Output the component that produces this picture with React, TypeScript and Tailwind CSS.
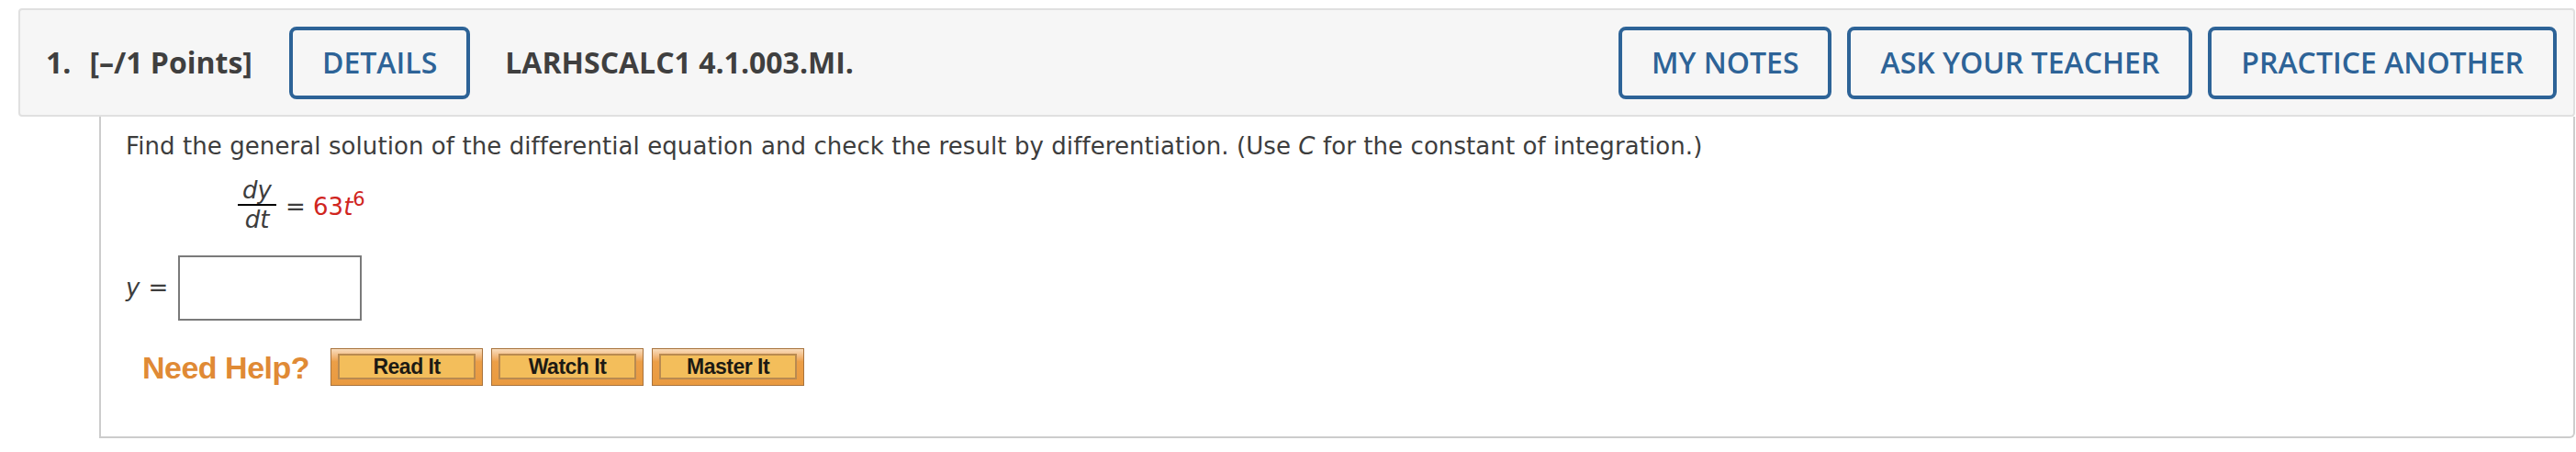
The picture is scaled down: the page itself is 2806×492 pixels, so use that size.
import React from 'react';

const headerFont = { fontFamily: '"Open Sans", "Liberation Sans", sans-serif' };
const bodyFont = { fontFamily: '"DejaVu Sans", Verdana, sans-serif' };
const helpFont = { fontFamily: '"Liberation Sans", Arial, sans-serif' };

const OutlineButton: React.FC<{ label: string }> = ({ label }) => (
  <button
    className="h-[79px] px-[32px] border-4 border-[#2d6397] rounded-[8px] text-[32px] font-semibold text-[#2d6397] leading-none flex items-center"
    style={headerFont}
  >
    {label}
  </button>
);

const HelpButton: React.FC<{ label: string }> = ({ label }) => (
  <div className="w-[166px] h-[41px] border border-[#a8733d] bg-linear-to-b from-[#f8dcbc] via-[#ec9f47] via-35% to-[#e99a40] pt-[5px] pb-[6px] px-[7px] flex">
    <div
      className="flex-1 border-2 border-[#b98a50] bg-[#f3be5b] flex items-center justify-center text-[23px] font-bold text-[#1c1a14] leading-none tracking-[-0.5px]"
      style={helpFont}
    >
      {label}
    </div>
  </div>
);

const App: React.FC = () => {
  return (
    <div className="w-[2806px] h-[492px] bg-white pt-[9px] pl-[20px] pr-[1px]">
      {/* question header */}
      <div
        className="h-[118px] flex items-center border-2 border-[#e0e0e0] rounded-[4px] bg-[#f6f6f6] pl-[28px] pr-[18px] text-[#3f3f3f]"
        style={headerFont}
      >
        <span className="text-[32px] font-bold leading-none">1.</span>
        <span className="ml-[20px] text-[32px] font-bold leading-none">[–/1 Points]</span>
        <div className="ml-[40px]">
          <OutlineButton label="DETAILS" />
        </div>
        <span className="ml-[38px] text-[32px] font-bold leading-none">LARHSCALC1 4.1.003.MI.</span>
        <div className="ml-auto flex gap-[17px]">
          <OutlineButton label="MY NOTES" />
          <OutlineButton label="ASK YOUR TEACHER" />
          <OutlineButton label="PRACTICE ANOTHER" />
        </div>
      </div>

      {/* question body */}
      <div
        className="ml-[88px] border-l-2 border-r-2 border-b-2 border-[#cccccc] rounded-br-[6px] pl-[27px] pt-[14px] pb-[55px] text-[#3d3d3d]"
        style={bodyFont}
      >
        <p className="text-[26px] leading-[36px] tracking-[0.08px]">
          Find the general solution of the differential equation and check the result by differentiation. (Use{' '}
          <i>C</i> for the constant of integration.)
        </p>

        <div className="mt-[16px] ml-[122px] flex items-center text-[26px]">
          <div className="inline-flex flex-col items-center w-[42px]">
            <span className="leading-[28px] italic">dy</span>
            <span className="w-full h-[2px] bg-black my-[1px]"></span>
            <span className="leading-[28px] italic">dt</span>
          </div>
          <span className="ml-[10px] leading-[28px] -translate-y-[2px]">
            = <span className="text-[#d0251e]">63<i>t</i><span className="text-[21px] align-[10px]">6</span></span>
          </span>
        </div>

        <div className="mt-[25px] flex items-center text-[26px]">
          <span className="italic">y</span>
          <span className="ml-[9px]">=</span>
          <div className="ml-[11px] w-[200px] h-[71px] border-2 border-[#7a7a7a] bg-white"></div>
        </div>

        <div className="mt-[30px] ml-[18px] flex items-center">
          <span className="text-[34px] font-bold text-[#e08a35] leading-none tracking-[-0.5px]" style={helpFont}>
            Need Help?
          </span>
          <div className="ml-[23px] flex gap-[9px]">
            <HelpButton label="Read It" />
            <HelpButton label="Watch It" />
            <HelpButton label="Master It" />
          </div>
        </div>
      </div>
    </div>
  );
};

export default App;
